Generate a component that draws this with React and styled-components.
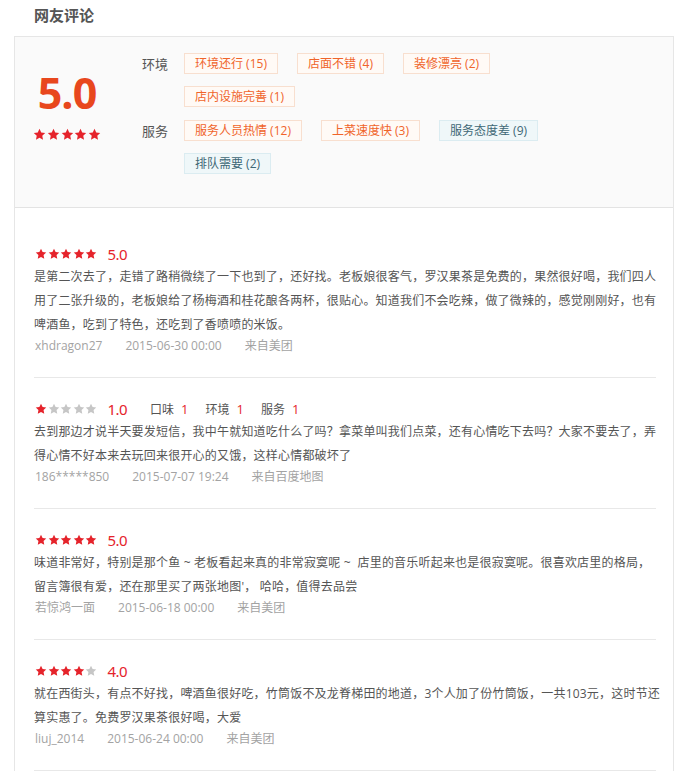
import React from "react";
import styled, { createGlobalStyle } from "styled-components";

const summaryGroups = [
    {
        label: "环境",
        tags: [
            { text: "环境还行 (15)", tone: "good" },
            { text: "店面不错 (4)", tone: "good" },
            { text: "装修漂亮 (2)", tone: "good" },
            { text: "店内设施完善 (1)", tone: "good" },
        ],
    },
    {
        label: "服务",
        tags: [
            { text: "服务人员热情 (12)", tone: "good" },
            { text: "上菜速度快 (3)", tone: "good" },
            { text: "服务态度差 (9)", tone: "bad" },
            { text: "排队需要 (2)", tone: "bad" },
        ],
    },
];

// 评论按参考图的换行拆成行
const reviews = [
    {
        stars: 5,
        score: "5.0",
        lines: [
            "是第二次去了，走错了路稍微绕了一下也到了，还好找。老板娘很客气，罗汉果茶是免费的，果然很好喝，我们四人",
            "用了二张升级的，老板娘给了杨梅酒和桂花酿各两杯，很贴心。知道我们不会吃辣，做了微辣的，感觉刚刚好，也有",
            "啤酒鱼，吃到了特色，还吃到了香喷喷的米饭。",
        ],
        user: "xhdragon27",
        time: "2015-06-30 00:00",
        source: "来自美团",
    },
    {
        stars: 1,
        score: "1.0",
        details: [
            { name: "口味", value: 1 },
            { name: "环境", value: 1 },
            { name: "服务", value: 1 },
        ],
        lines: [
            "去到那边才说半天要发短信，我中午就知道吃什么了吗？拿菜单叫我们点菜，还有心情吃下去吗？大家不要去了，弄",
            "得心情不好本来去玩回来很开心的又饿，这样心情都破坏了",
        ],
        user: "186*****850",
        time: "2015-07-07 19:24",
        source: "来自百度地图",
    },
    {
        stars: 5,
        score: "5.0",
        lines: [
            "味道非常好，特别是那个鱼 ~ 老板看起来真的非常寂寞呢 ~  店里的音乐听起来也是很寂寞呢。很喜欢店里的格局，",
            "留言簿很有爱，还在那里买了两张地图'， 哈哈，值得去品尝",
        ],
        user: "若惊鸿一面",
        time: "2015-06-18 00:00",
        source: "来自美团",
    },
    {
        stars: 4,
        score: "4.0",
        lines: [
            "就在西街头，有点不好找，啤酒鱼很好吃，竹筒饭不及龙脊梯田的地道，3个人加了份竹筒饭，一共103元，这时节还",
            "算实惠了。免费罗汉果茶很好喝，大爱",
        ],
        user: "liuj_2014",
        time: "2015-06-24 00:00",
        source: "来自美团",
    },
];

const Star = ({ on, size }) => (
    <StarSvg viewBox="0 0 24 24" width={size} height={size} $on={on}>
        <polygon points="12,1.5 15.2,8.2 22.5,9.1 17.1,14.1 18.5,21.6 12,17.9 5.5,21.6 6.9,14.1 1.5,9.1 8.8,8.2" />
    </StarSvg>
);

const Stars = ({ count, size = 12 }) => (
    <StarRow>
        {[1, 2, 3, 4, 5].map(i => (
            <Star key={i} on={i <= count} size={size} />
        ))}
    </StarRow>
);

const App = () => {
    return (
        <>
            <GlobalStyle />
            <Page>
                <Title>网友评论</Title>
                <Panel>
                    <Summary>
                        <ScoreCol>
                            <BigScore>5.0</BigScore>
                            <BigStars>
                                <Stars count={5} size={13} />
                            </BigStars>
                        </ScoreCol>
                        <Groups>
                            {summaryGroups.map(group => (
                                <Group key={group.label}>
                                    <GroupLabel>{group.label}</GroupLabel>
                                    <TagList>
                                        {group.tags.map(tag => (
                                            <Tag key={tag.text} $tone={tag.tone}>{tag.text}</Tag>
                                        ))}
                                    </TagList>
                                </Group>
                            ))}
                        </Groups>
                    </Summary>
                    <ReviewList>
                        {reviews.map((review, idx) => (
                            <ReviewItem key={idx}>
                                <RatingRow>
                                    <Stars count={review.stars} />
                                    <ReviewScore>{review.score}</ReviewScore>
                                    {review.details && (
                                        <Details>
                                            {review.details.map(d => (
                                                <Detail key={d.name}>
                                                    {d.name}<DetailValue>{d.value}</DetailValue>
                                                </Detail>
                                            ))}
                                        </Details>
                                    )}
                                </RatingRow>
                                <Comment>
                                    {review.lines.map((line, i) => (
                                        <CommentLine key={i}>{line}</CommentLine>
                                    ))}
                                </Comment>
                                <Meta>
                                    <MetaItem>{review.user}</MetaItem>
                                    <MetaItem>{review.time}</MetaItem>
                                    <MetaItem>{review.source}</MetaItem>
                                </Meta>
                            </ReviewItem>
                        ))}
                    </ReviewList>
                </Panel>
            </Page>
        </>
    );
};

const GlobalStyle = createGlobalStyle`
    body {
        margin: 0;
        background: #fff;
        font-family: "Open Sans", "Noto Sans CJK SC", sans-serif;
        color: #555;
    }
`;

const Page = styled.div`
    width: 688px;
    overflow: hidden;
`;

const Title = styled.h3`
    margin: 0;
    padding: 5px 0 0 34px;
    font-size: 15px;
    line-height: 20px;
    font-weight: bold;
    color: #555;
    font-family: "Noto Sans CJK SC", sans-serif;
`;

const Panel = styled.div`
    margin: 11px 0 0 14px;
    width: 658px;
    border: 1px solid #e6e6e6;
    border-bottom: none;
`;

const Summary = styled.div`
    display: flex;
    height: 171px;
    box-sizing: border-box;
    padding-top: 16px;
    background: #fafafa;
    border-bottom: 1px solid #e3e3e3;
`;

const ScoreCol = styled.div`
    width: 104px;
    margin-right: 23px;
    display: flex;
    flex-direction: column;
    align-items: center;
    padding-top: 19px;
`;

const BigScore = styled.div`
    font-size: 43px;
    line-height: 42px;
    font-weight: bold;
    color: #e8471d;
    font-family: "Open Sans", sans-serif;
    letter-spacing: -1px;
`;

const BigStars = styled.div`
    margin-top: 10px;
`;

const StarRow = styled.span`
    display: inline-flex;
    gap: 0.6px;
`;

const StarSvg = styled.svg`
    display: block;
    fill: ${props => (props.$on ? "#e5232b" : "#c6c6c6")};
`;

const Groups = styled.div`
    display: flex;
    flex-direction: column;
    gap: 13px;
`;

const Group = styled.div`
    display: flex;
    align-items: flex-start;
`;

const GroupLabel = styled.div`
    width: 42px;
    font-size: 13px;
    line-height: 21px;
    color: #555;
    font-family: "Noto Sans CJK SC", sans-serif;
`;

const TagList = styled.div`
    display: flex;
    flex-wrap: wrap;
    width: 420px;
    column-gap: 19px;
    row-gap: 12px;
`;

const Tag = styled.span`
    display: inline-block;
    height: 21px;
    box-sizing: border-box;
    padding: 0 10px;
    font-size: 12px;
    line-height: 19px;
    border: 1px solid ${props => (props.$tone === "bad" ? "#dbecf1" : "#f8dfcf")};
    background: ${props => (props.$tone === "bad" ? "#eff7f9" : "#fffaf6")};
    color: ${props => (props.$tone === "bad" ? "#3e6776" : "#f0642a")};
    white-space: nowrap;
`;

const ReviewList = styled.div`
    padding: 15px 17px 0 19px;
`;

const ReviewItem = styled.div`
    padding: 21px 0 22px;
    border-bottom: 1px solid #e8e8e8;
`;

const RatingRow = styled.div`
    display: flex;
    align-items: center;
    height: 20px;
    padding-left: 1px;
`;

const ReviewScore = styled.span`
    margin-left: 10px;
    font-size: 15px;
    color: #e5232b;
    font-family: "Noto Sans", sans-serif;
    letter-spacing: -0.5px;
`;

const Details = styled.span`
    display: flex;
    gap: 17px;
    margin-left: 23px;
`;

const Detail = styled.span`
    font-size: 12px;
    color: #555;
    font-family: "Noto Sans CJK SC", sans-serif;
`;

const DetailValue = styled.span`
    margin-left: 7px;
    color: #e5232b;
    font-size: 13px;
    font-family: "Open Sans", sans-serif;
`;

const Comment = styled.div`
    padding-top: 1px;
`;

const CommentLine = styled.div`
    font-size: 12px;
    line-height: 24px;
    color: #555;
    white-space: pre;
    letter-spacing: 0.2px;
    font-family: "Open Sans", "Noto Sans CJK SC", sans-serif;
`;

const Meta = styled.div`
    display: flex;
    font-size: 12px;
    line-height: 18px;
    color: #a3a3a3;
    padding-left: 1px;
`;

const MetaItem = styled.span`
    margin-right: 23px;
    font-family: "Open Sans", "Noto Sans CJK SC", sans-serif;
`;

export default App;
